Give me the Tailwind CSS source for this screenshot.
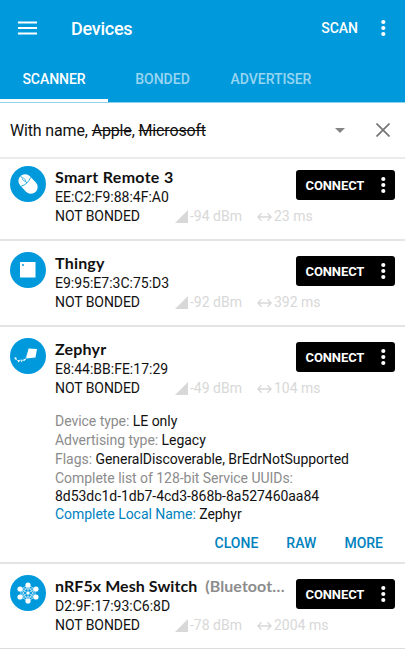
<!DOCTYPE html>
<html lang="en">
<head>
<meta charset="utf-8">
<title>Devices</title>
<script src="https://cdn.jsdelivr.net/npm/@tailwindcss/browser@4"></script>
</head>
<body class="w-[405px] h-[649px] overflow-hidden bg-white font-['Roboto',sans-serif] text-[14px] leading-[19px] text-[#111] whitespace-nowrap">
<svg class="hidden">
  <symbol id="dots" viewBox="0 0 6 18"><circle cx="3.300" cy="3" r="2.100"/><circle cx="3.300" cy="9" r="2.100"/><circle cx="3.300" cy="15" r="2.100"/></symbol>
  <symbol id="signal" viewBox="0 0 13 13"><path d="M13 0v13H0z"/></symbol>
  <symbol id="interval" viewBox="0 0 15 10"><path d="M1 5h13M4.5 1.2L.9 5l3.600 3.800M10.5 1.2L14.1 5l-3.600 3.800" fill="none" stroke="currentColor" stroke-width="1.300"/></symbol>
</svg>
<header class="h-[103px] bg-[#0099dc] border-b border-[#8fd0ef] text-white font-medium">
  <div class="flex h-[56px] items-center pl-[18px] pr-[19px]">
    <svg class="w-[19px] h-[14px]" viewBox="0 0 19 14" fill="currentColor"><path d="M0 .5h19v2H0zM0 6h19v2H0zM0 11.500h19v2H0z"/></svg>
    <h1 class="ml-[34px] text-[18px] tracking-[-0.25px]">Devices</h1>
    <span class="ml-auto text-[14px]">SCAN</span>
    <svg class="ml-[22px] w-[6px] h-[18px]" fill="currentColor"><use href="#dots"/></svg>
  </div>
  <nav class="flex h-[46px] text-[14px] leading-[46px]">
    <div class="w-[108px] text-center border-b-3 border-white tracking-[-0.05px]">SCANNER</div>
    <div class="w-[109px] text-center text-white/60">BONDED</div>
    <div class="w-[108px] text-center text-white/60 tracking-[-0.05px]">ADVERTISER</div>
  </nav>
</header>
<section class="flex h-[56px] items-center border-b-2 border-[#ebebeb] pl-[10px] pr-[15px] text-[16px] tracking-[-0.15px]">
  <span>With name, <s>Apple</s>, <s>Microsoft</s></span>
  <svg class="ml-auto w-[10px] h-[5px]" viewBox="0 0 10 5" fill="#858585"><path d="M0 0h10L5 5z"/></svg>
  <svg class="ml-[31px] w-[14px] h-[14px]" viewBox="0 0 14 14" stroke="#757575" stroke-width="1.700"><path d="M.5 .5l13 13M13.500 .5l-13 13"/></svg>
</section>
<main>
  <article class="flex h-[82px] border-b-2 border-[#e4e4e4] pl-[10px] pr-[10px]">
    <svg class="mt-[7px] w-[36px] h-[36px] shrink-0" viewBox="0 0 36 36"><circle cx="18" cy="18" r="18" fill="#0099dc"/><g transform="rotate(-43 18 18)"><rect x="11.300" y="7" width="13.400" height="22" rx="6.700" fill="#fff"/><path d="M11.500 15q6.500 3 13 0M18 7V10M18 13.500v3" fill="none" stroke="#0099dc" stroke-width=".8"/><ellipse cx="18" cy="12" rx="1" ry="2" fill="none" stroke="#0099dc" stroke-width=".6"/></g></svg>
    <div class="ml-[9px] mt-[8px] w-[241px] shrink-0">
      <h2 class="h-[21px] leading-[19px] font-['Lato',sans-serif] font-bold text-[16px] tracking-[0.3px]">Smart Remote 3</h2>
      <p>EE:C2:F9:88:4F:A0</p>
      <p class="flex items-center"><span class="w-[120px] shrink-0 tracking-[-0.07px]">NOT BONDED</span><span class="flex w-[82px] shrink-0 items-center text-[#d8d8d8]"><svg class="w-[13px] h-[13px] mr-[2px] shrink-0" fill="currentColor"><use href="#signal"/></svg>-94 dBm</span><span class="flex items-center text-[#d8d8d8]"><svg class="w-[15px] h-[10px] mr-[2px] shrink-0"><use href="#interval"/></svg>23 ms</span></p>
    </div>
    <button class="shrink-0 mt-[11px] flex w-[99px] h-[30px] items-center rounded-[3px] bg-black text-white text-[13px] font-bold tracking-[-0.1px] pl-[9.500px] pr-[9px]">CONNECT<svg class="ml-auto w-[6px] h-[18px]" fill="currentColor"><use href="#dots"/></svg></button>
  </article>
  <article class="flex h-[86px] border-b-2 border-[#e4e4e4] pl-[10px] pr-[10px]">
    <svg class="mt-[11px] w-[36px] h-[36px] shrink-0" viewBox="0 0 36 36"><circle cx="18" cy="18" r="18" fill="#0099dc"/><rect x="10" y="10" width="15.500" height="15.500" fill="#fff"/><circle cx="13" cy="13" r="1" fill="#0099dc"/></svg>
    <div class="ml-[9px] mt-[12px] w-[241px] shrink-0">
      <h2 class="h-[21px] leading-[19px] font-['Lato',sans-serif] font-bold text-[16px] tracking-[0.2px]">Thingy</h2>
      <p>E9:95:E7:3C:75:D3</p>
      <p class="flex items-center"><span class="w-[120px] shrink-0 tracking-[-0.07px]">NOT BONDED</span><span class="flex w-[82px] shrink-0 items-center text-[#d8d8d8]"><svg class="w-[13px] h-[13px] mr-[2px] shrink-0" fill="currentColor"><use href="#signal"/></svg>-92 dBm</span><span class="flex items-center text-[#d8d8d8]"><svg class="w-[15px] h-[10px] mr-[2px] shrink-0"><use href="#interval"/></svg>392 ms</span></p>
    </div>
    <button class="shrink-0 mt-[15px] flex w-[99px] h-[30px] items-center rounded-[3px] bg-black text-white text-[13px] font-bold tracking-[-0.1px] pl-[9.500px] pr-[9px]">CONNECT<svg class="ml-auto w-[6px] h-[18px]" fill="currentColor"><use href="#dots"/></svg></button>
  </article>
  <article class="h-[237px] border-b-2 border-[#e4e4e4] pl-[10px] pr-[10px]">
    <div class="flex h-[85px]">
      <svg class="mt-[11px] w-[36px] h-[36px] shrink-0" viewBox="0 0 36 36"><circle cx="18" cy="18" r="18" fill="#0099dc"/><path d="M18.500 10.500L27 11L25.500 19.500L16.500 20.500z" fill="#fff"/><path d="M18.500 13L15.500 21.500L14 22.500L11 22L8 23L5 20" fill="none" stroke="#fff" stroke-width=".7"/><path d="M4.500 19l2.500 1-2 2zM8 22l2 1-2 1.500zM11 22l1.500 1-1 1.500zM13.500 20.500l2 1-1.500 1.500z" fill="#fff"/></svg>
      <div class="ml-[9px] mt-[12px] w-[241px] shrink-0">
        <h2 class="h-[21px] leading-[19px] font-['Lato',sans-serif] font-bold text-[16px] tracking-[0.2px]">Zephyr</h2>
        <p>E8:44:BB:FE:17:29</p>
        <p class="flex items-center"><span class="w-[120px] shrink-0 tracking-[-0.07px]">NOT BONDED</span><span class="flex w-[82px] shrink-0 items-center text-[#d8d8d8]"><svg class="w-[13px] h-[13px] mr-[2px] shrink-0" fill="currentColor"><use href="#signal"/></svg>-49 dBm</span><span class="flex items-center text-[#d8d8d8]"><svg class="w-[15px] h-[10px] mr-[2px] shrink-0"><use href="#interval"/></svg>104 ms</span></p>
      </div>
      <button class="shrink-0 mt-[15px] flex w-[99px] h-[30px] items-center rounded-[3px] bg-black text-white text-[13px] font-bold tracking-[-0.1px] pl-[9.500px] pr-[9px]">CONNECT<svg class="ml-auto w-[6px] h-[18px]" fill="currentColor"><use href="#dots"/></svg></button>
    </div>
    <div class="ml-[45px] tracking-[-0.04px]">
      <p><span class="text-[#8c8c8c]">Device type:</span> LE only</p>
      <p><span class="text-[#8c8c8c]">Advertising type:</span> Legacy</p>
      <p><span class="text-[#8c8c8c]">Flags:</span> GeneralDiscoverable, BrEdrNotSupported</p>
      <p class="text-[#8c8c8c]">Complete list of 128-bit Service UUIDs:</p>
      <p class="leading-[16px]">8d53dc1d-1db7-4cd3-868b-8a527460aa84</p>
      <p class="mt-[1px]"><span class="text-[#0082be]">Complete Local Name:</span> Zephyr</p>
    </div>
    <div class="mt-[10px] flex justify-end gap-[28px] pr-[12px] font-medium text-[#0082be]"><span>CLONE</span><span>RAW</span><span>MORE</span></div>
  </article>
  <article class="flex h-[85px] border-b border-[#dcdcdc] pl-[10px] pr-[10px]">
    <svg class="mt-[11px] w-[36px] h-[36px] shrink-0" viewBox="0 0 36 36"><circle cx="18" cy="18" r="18" fill="#0099dc"/><g stroke="#fff" stroke-width=".6" fill="none"><path d="M18 10l7 4v8l-7 4-7-4v-8zM18 10v16M11 14l14 8M25 14l-14 8M18 10l7 12H11zM18 26l7-12H11z"/></g><g fill="#fff"><circle cx="18" cy="10" r="2.600"/><circle cx="26" cy="14" r="2.600"/><circle cx="26" cy="22" r="2.600"/><circle cx="18" cy="26" r="2.600"/><circle cx="10" cy="22" r="2.600"/><circle cx="10" cy="14" r="2.600"/><circle cx="18" cy="18" r="1.500"/></g></svg>
    <div class="ml-[9px] mt-[12px] w-[241px] shrink-0">
      <h2 class="h-[21px] leading-[19px] font-['Lato',sans-serif] font-bold text-[16px] tracking-[0.07px]">nRF5x Mesh Switch <span class="ml-[4px] text-[#8c8c8c]">(Bluetoot…</span></h2>
      <p>D2:9F:17:93:C6:8D</p>
      <p class="flex items-center"><span class="w-[120px] shrink-0 tracking-[-0.07px]">NOT BONDED</span><span class="flex w-[82px] shrink-0 items-center text-[#d8d8d8]"><svg class="w-[13px] h-[13px] mr-[2px] shrink-0" fill="currentColor"><use href="#signal"/></svg>-78 dBm</span><span class="flex items-center text-[#d8d8d8]"><svg class="w-[15px] h-[10px] mr-[2px] shrink-0"><use href="#interval"/></svg>2004 ms</span></p>
    </div>
    <button class="shrink-0 mt-[15px] flex w-[99px] h-[30px] items-center rounded-[3px] bg-black text-white text-[13px] font-bold tracking-[-0.1px] pl-[9.500px] pr-[9px]">CONNECT<svg class="ml-auto w-[6px] h-[18px]" fill="currentColor"><use href="#dots"/></svg></button>
  </article>
</main>
</body>
</html>
